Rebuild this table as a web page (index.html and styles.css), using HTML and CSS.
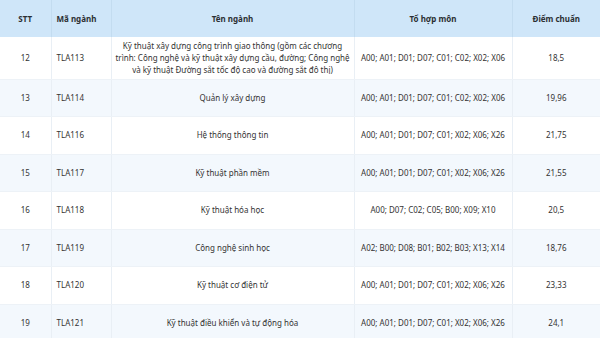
FILE: index.html
```html
<!DOCTYPE html>
<html lang="vi">
<head>
<meta charset="utf-8">
<link rel="stylesheet" href="styles.css">
</head>
<body>
<table class="scores">
  <colgroup>
    <col class="c-stt"><col class="c-code"><col class="c-name"><col class="c-combo"><col class="c-score">
  </colgroup>
  <thead>
    <tr>
      <th>STT</th>
      <th class="left">Mã ngành</th>
      <th>Tên ngành</th>
      <th>Tổ hợp môn</th>
      <th>Điểm chuẩn</th>
    </tr>
  </thead>
  <tbody>
    <tr class="tall">
      <td>12</td><td class="left">TLA113</td>
      <td class="name">Kỹ thuật xây dựng công trình giao thông (gồm các chương trình: Công nghệ và kỹ thuật xây dựng cầu, đường; Công nghệ và kỹ thuật Đường sắt tốc độ cao và đường sắt đô thị)</td>
      <td>A00; A01; D01; D07; C01; C02; X02; X06</td><td>18,5</td>
    </tr>
    <tr class="alt">
      <td>13</td><td class="left">TLA114</td><td class="name">Quản lý xây dựng</td>
      <td>A00; A01; D01; D07; C01; C02; X02; X06</td><td>19,96</td>
    </tr>
    <tr>
      <td>14</td><td class="left">TLA116</td><td class="name">Hệ thống thông tin</td>
      <td>A00; A01; D01; D07; C01; X02; X06; X26</td><td>21,75</td>
    </tr>
    <tr class="alt">
      <td>15</td><td class="left">TLA117</td><td class="name">Kỹ thuật phần mềm</td>
      <td>A00; A01; D01; D07; C01; X02; X06; X26</td><td>21,55</td>
    </tr>
    <tr>
      <td>16</td><td class="left">TLA118</td><td class="name">Kỹ thuật hóa học</td>
      <td>A00; D07; C02; C05; B00; X09; X10</td><td>20,5</td>
    </tr>
    <tr class="alt">
      <td>17</td><td class="left">TLA119</td><td class="name">Công nghệ sinh học</td>
      <td>A02; B00; D08; B01; B02; B03; X13; X14</td><td>18,76</td>
    </tr>
    <tr>
      <td>18</td><td class="left">TLA120</td><td class="name">Kỹ thuật cơ điện tử</td>
      <td>A00; A01; D01; D07; C01; X02; X06; X26</td><td>23,33</td>
    </tr>
    <tr class="alt">
      <td>19</td><td class="left">TLA121</td><td class="name">Kỹ thuật điều khiển và tự động hóa</td>
      <td>A00; A01; D01; D07; C01; X02; X06; X26</td><td>24,1</td>
    </tr>
  </tbody>
</table>
</body>
</html>
```

FILE: styles.css
```css
html, body {
  margin: 0;
  padding: 0;
  background: #ffffff;
}
body {
  font-family: "Noto Sans", "Open Sans", sans-serif;
  font-size: 8px;
  color: #333333;
  overflow: hidden;
}
.scores {
  width: 600px;
  border-collapse: collapse;
  table-layout: fixed;
}
.c-stt { width: 51px; }
.c-code { width: 60px; }
.c-name { width: 243px; }
.c-combo { width: 158px; }
.c-score { width: 88px; }

.scores th,
.scores td {
  text-align: center;
  vertical-align: middle;
  padding: 3px 6px;
  line-height: 11.7px;
  border-left: 1px solid #e9eff5;
  border-bottom: 1px solid #edf2f7;
}
.scores th:first-child,
.scores td:first-child { border-left: none; }
.scores .left { text-align: left; padding-left: 5px; }
.scores td.name { padding-left: 2px; padding-right: 2px; }

.scores thead tr {
  height: 37px;
  background: #cfe6f9;
}
.scores th {
  font-weight: 700;
  color: #2b2f33;
  border-left-color: #c3dcf0;
  border-bottom: none;
}
.scores tbody tr { height: 37.5px; }
.scores tbody tr.tall { height: 42px; }
.scores tbody tr.alt { background: #f3f8fd; }
```
